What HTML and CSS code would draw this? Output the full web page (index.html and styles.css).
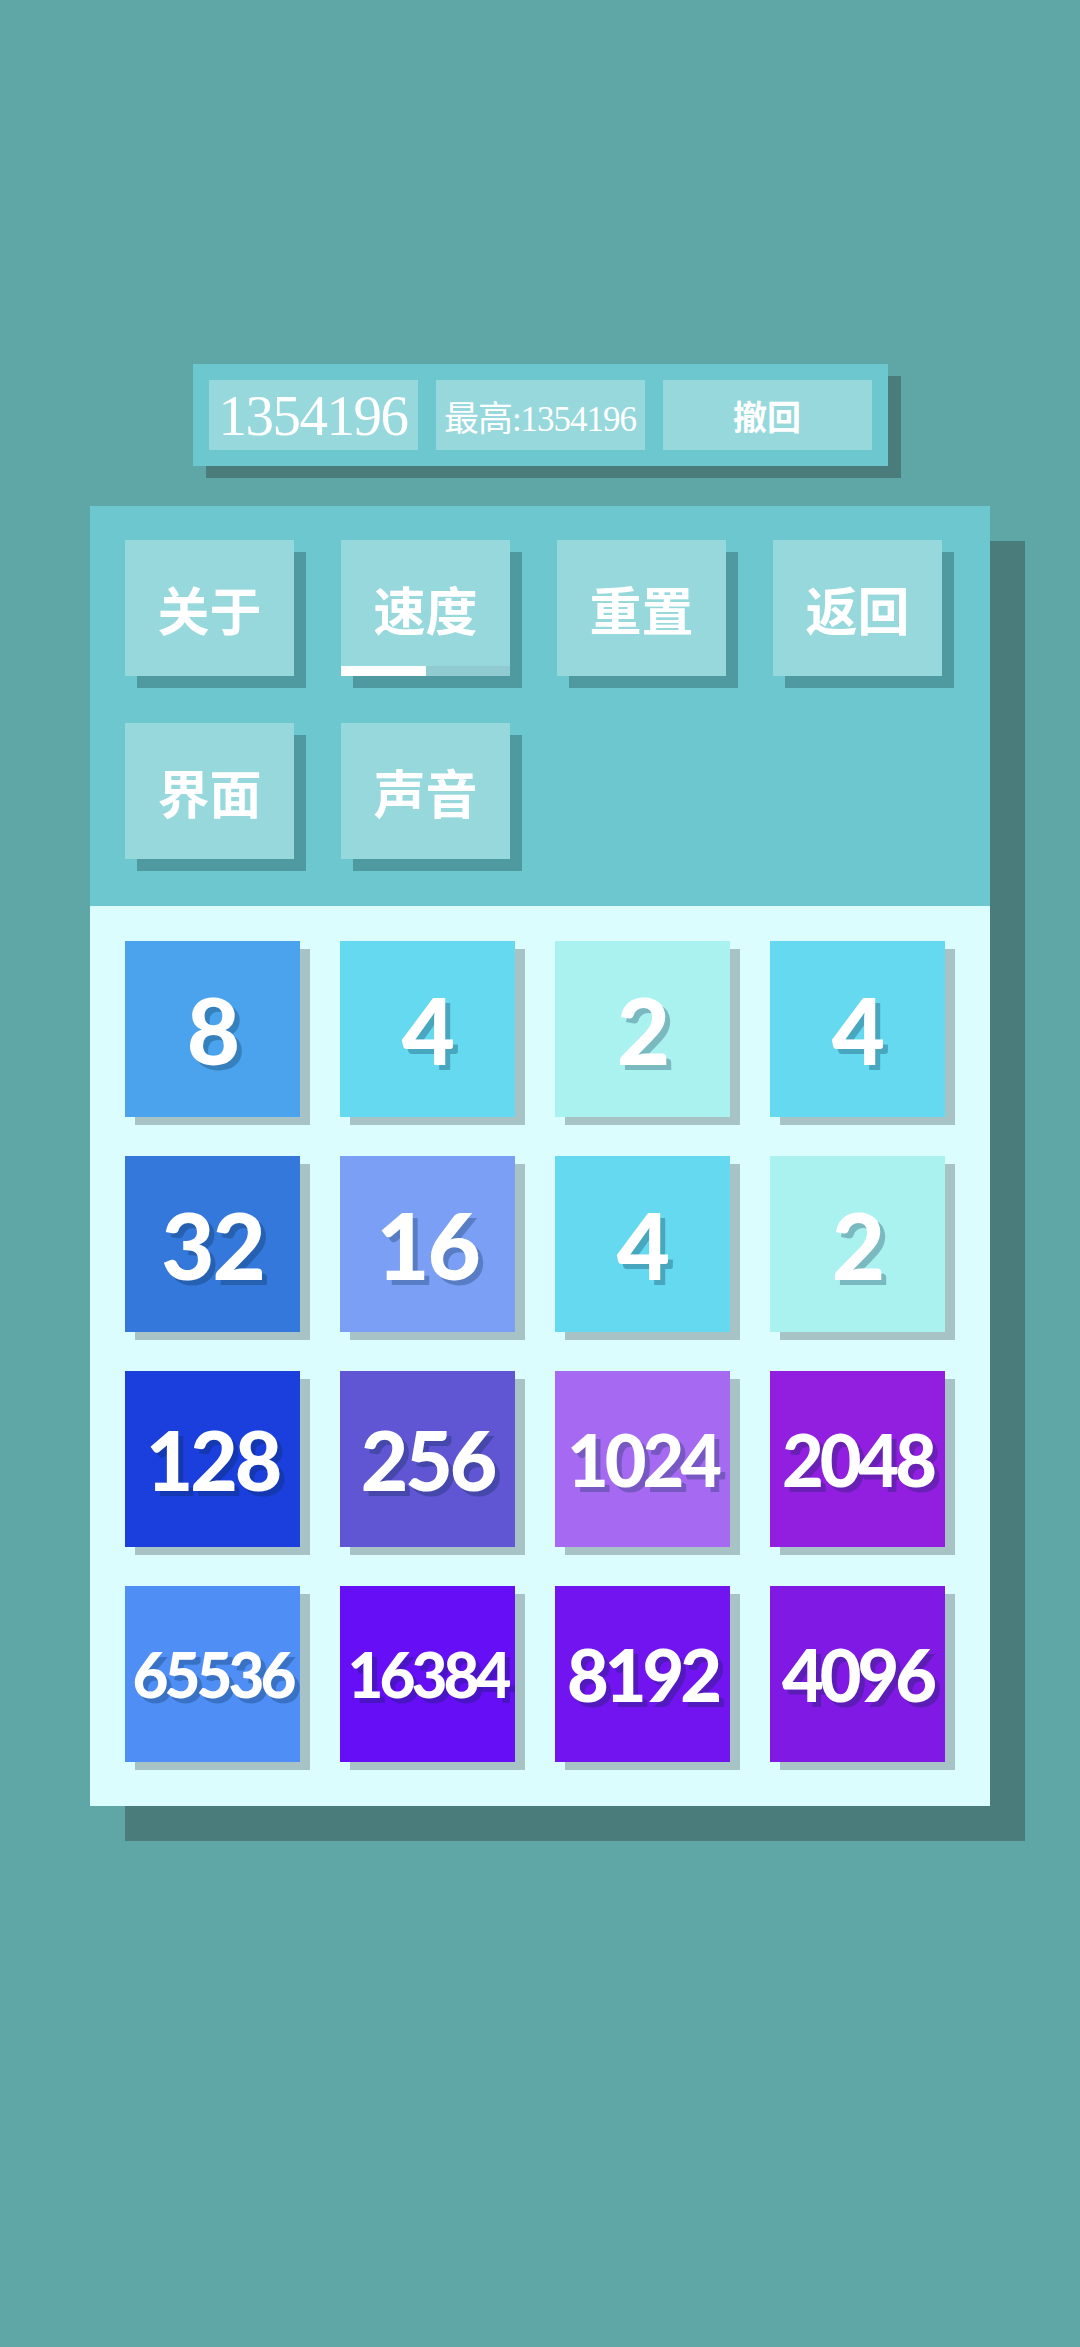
FILE: index.html
```html
<!DOCTYPE html>
<html lang="zh">
<head>
    <meta charset="UTF-8">
    <meta name="viewport" content="width=device-width, initial-scale=1.0">
    <title>2048</title>
    <link rel="stylesheet" href="styles.css">
</head>
<body>
    <div class="page">
        <div class="scorebar">
            <div class="box score">1354196</div>
            <div class="box best">最高:1354196</div>
            <div class="box undo">撤回</div>
        </div>

        <div class="panel">
            <div class="menu">
                <div class="btn">关于</div>
                <div class="btn speed">
                    <span class="label">速度</span>
                    <div class="bar"><div class="fill" style="width: 50%"></div></div>
                </div>
                <div class="btn">重置</div>
                <div class="btn">返回</div>
                <div class="btn">界面</div>
                <div class="btn">声音</div>
            </div>

            <div class="board">
                <div class="tile t8">8</div>
                <div class="tile t4">4</div>
                <div class="tile t2">2</div>
                <div class="tile t4">4</div>

                <div class="tile t32">32</div>
                <div class="tile t16">16</div>
                <div class="tile t4">4</div>
                <div class="tile t2">2</div>

                <div class="tile t128 d3">128</div>
                <div class="tile t256 d3">256</div>
                <div class="tile t1024 d4">1024</div>
                <div class="tile t2048 d4">2048</div>

                <div class="tile t65536 d5">65536</div>
                <div class="tile t16384 d5">16384</div>
                <div class="tile t8192 d4">8192</div>
                <div class="tile t4096 d4">4096</div>
            </div>
        </div>
    </div>
</body>
</html>
```

FILE: styles.css
```css
html, body { margin: 0; height: 100%; }
body { background: #5fa6a6; font-family: "Noto Sans CJK SC", sans-serif; color: #fff; }

.page { display: flex; flex-direction: column; align-items: center; padding-top: 364px; }

/* score bar */
.scorebar { display: flex; gap: 18px; padding: 16px; background: #6cc8ce; box-shadow: 13px 12px 0 #4a7c7c; }
.box { width: 209px; height: 70px; background: #97d8dc; display: flex; align-items: center; justify-content: center; white-space: nowrap; }
.score { font-family: "Liberation Serif", "Noto Sans CJK SC", serif; font-size: 57px; letter-spacing: -1.5px; }
.best { font-family: "Liberation Serif", "Noto Sans CJK SC", serif; font-size: 35px; letter-spacing: -1px; }
.undo { font-size: 34px; font-weight: 700; }

/* main panel */
.panel { width: 900px; margin-top: 40px; box-shadow: 35px 35px 0 #4a7c7c; }

.menu { display: flex; flex-wrap: wrap; padding: 34px 0 0 35px; background: #6cc8ce; }
.btn { width: 169px; height: 136px; margin: 0 47px 47px 0; background: #97d8dc; box-shadow: 12px 12px 0 #4f99a0; display: flex; flex-direction: column; align-items: center; justify-content: center; font-size: 52px; font-weight: 700; }
.speed { padding-top: 10px; box-sizing: border-box; }
.speed .label { flex: 1; display: flex; align-items: center; }
.bar { width: 100%; height: 10px; background: #8fcbd1; }
.fill { height: 100%; background: #fff; }

/* board */
.board { display: grid; grid-template-columns: repeat(4, 175px); grid-auto-rows: 176px; gap: 39px 40px; padding: 35px 45px 44px 35px; background: #dbfdfd; }
.tile { display: flex; align-items: center; justify-content: center; font-family: "Lato", "Open Sans", sans-serif; font-weight: 900; font-size: 92px; box-shadow: 10px 8px 0 #a8c3c5; text-shadow: 5px 5px 0 rgba(0, 40, 70, 0.28); letter-spacing: -2px; }
.d3 { font-size: 82px; letter-spacing: -3px; }
.d4 { font-size: 72px; letter-spacing: -4px; }
.d5 { font-size: 62px; letter-spacing: -4px; }

.t2 { background: #aaf2f0; }
.t4 { background: #65d9ef; }
.t8 { background: #4aa3ec; }
.t16 { background: #7b9ff5; }
.t32 { background: #3578db; }
.t128 { background: #1b3fdc; }
.t256 { background: #6055d2; }
.t1024 { background: #a66af2; }
.t2048 { background: #921ee0; }
.t4096 { background: #8019e4; }
.t8192 { background: #7214ef; }
.t16384 { background: #660ef5; }
.t65536 { background: #4f8ff5; }
```
